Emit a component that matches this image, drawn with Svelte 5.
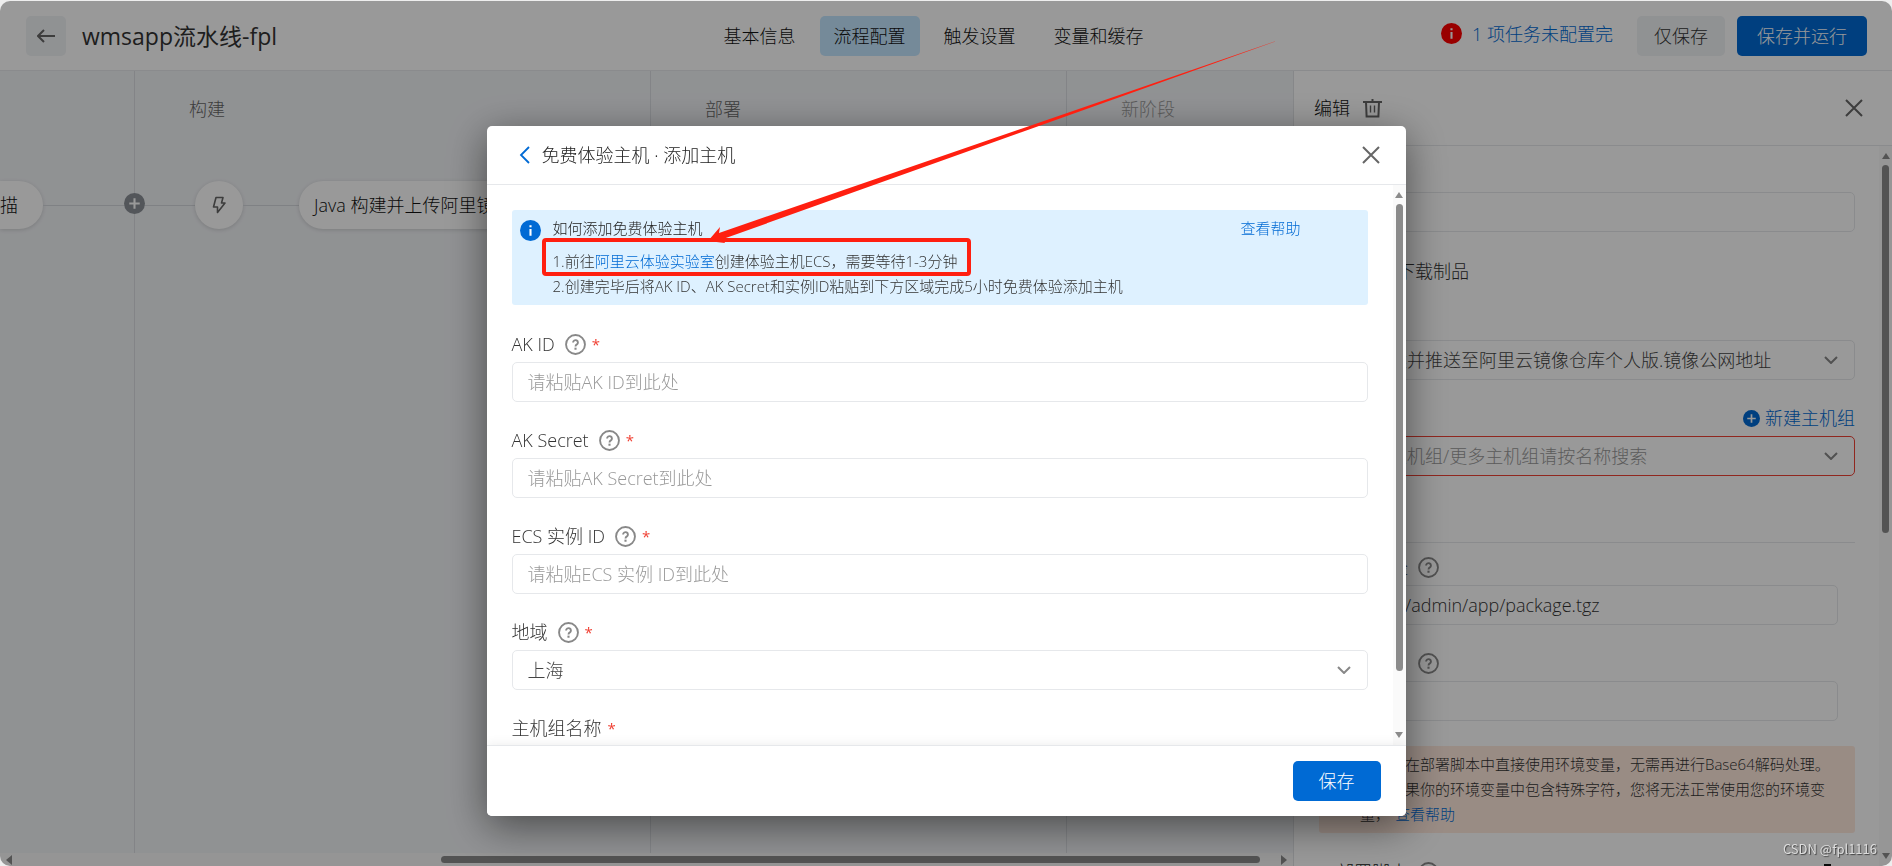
<script>
  let region = $state('上海');
  let artifact = $state('image');
  let hostGroup = $state('');
  let downloadPath = $state('/home/admin/app/package.tgz');

  const tabs = ['基本信息', '流程配置', '触发设置', '变量和缓存'];
  const activeTab = '流程配置';

  const fields = [
    { id: 'ak-id', label: 'AK ID', placeholder: '请粘贴AK ID到此处' },
    { id: 'ak-secret', label: 'AK Secret', placeholder: '请粘贴AK Secret到此处' },
    { id: 'ecs-id', label: 'ECS 实例 ID', placeholder: '请粘贴ECS 实例 ID到此处' }
  ];
</script>

{#snippet help()}
  <svg class="help" viewBox="0 0 20 20" width="21" height="21" aria-hidden="true">
    <circle cx="10" cy="10" r="9" fill="none" stroke="currentColor" stroke-width="1.8" />
    <path d="M7.700 8.100a2.300 2.200 0 1 1 3.600 1.800c-.9.6-1.300.9-1.300 1.900" fill="none" stroke="currentColor" stroke-width="1.8" />
    <rect x="9" y="13" width="2" height="2" fill="currentColor" />
  </svg>
{/snippet}

{#snippet info()}
  <svg class="info" viewBox="0 0 20 20" width="21" height="21" aria-hidden="true">
    <circle cx="10" cy="10" r="10" fill="currentColor" />
    <path d="M9 5h2v2H9zM9 8.500h2V15H9z" fill="#fff" />
  </svg>
{/snippet}

{#snippet plus(size)}
  <svg class="plus" viewBox="0 0 20 20" width={size} height={size} aria-hidden="true">
    <circle cx="10" cy="10" r="10" fill="currentColor" />
    <path d="M10 5v10M5 10h10" stroke="#fff" stroke-width="2" />
  </svg>
{/snippet}

{#snippet cross()}
  <svg viewBox="0 0 18 18" width="18" height="18" aria-hidden="true">
    <path d="M1 1l16 16M17 1L1 17" fill="none" stroke="currentColor" stroke-width="2" />
  </svg>
{/snippet}

{#snippet chevron()}
  <svg class="chevron" viewBox="0 0 14 8" width="14" height="8" aria-hidden="true">
    <path d="M1 1l6 6 6-6" fill="none" stroke="currentColor" stroke-width="2" />
  </svg>
{/snippet}

{#snippet scrollbar(start, size)}
  <div class="scrollbar" aria-hidden="true">
    <i class="up"></i>
    <div class="track"><b style="flex-grow: {size}"></b><span style="flex-grow: {start}"></span></div>
    <i class="down"></i>
  </div>
{/snippet}

<div class="page">
  <header>
    <div class="left">
      <button class="back" aria-label="返回">
        <svg viewBox="0 0 18 14" width="18" height="14"><path d="M7 1L1 7l6 6M1 7h17" fill="none" stroke="currentColor" stroke-width="2" /></svg>
      </button>
      <h1>wmsapp流水线-fpl</h1>
    </div>
    <nav>
      {#each tabs as tab}
        <a href="#tab" class:active={tab === activeTab}>{tab}</a>
      {/each}
    </nav>
    <div class="right">
      <a href="#todo" class="todo">{@render info()}1 项任务未配置完</a>
      <button class="plain">仅保存</button>
      <button class="primary run">保存并运行</button>
    </div>
  </header>

  <div class="main">
    <section class="canvas">
      <div class="stages">
        <div class="stage first">
          <div class="flow"><div class="node tail">描</div><div class="line"></div></div>
          <button class="add" aria-label="添加阶段">{@render plus(21)}</button>
        </div>
        <div class="stage build">
          <h2>构建</h2>
          <div class="flow">
            <div class="line"></div>
            <div class="node bolt">
              <svg viewBox="0 0 14 18" width="14" height="18"><path d="M4 1.500h7L9.500 7H13L5.500 16.500V11H1.500z" fill="none" stroke="currentColor" stroke-width="1.6" stroke-linejoin="round" /></svg>
            </div>
            <div class="line"></div>
            <div class="node job">Java 构建并上传阿里镜像</div>
          </div>
        </div>
        <div class="stage deploy"><h2>部署</h2></div>
        <div class="stage fresh"><h2>新阶段</h2></div>
      </div>
      <div class="hbar" aria-hidden="true"><i class="prev"></i><div class="track"><b></b></div><i class="next"></i></div>
    </section>

    <aside>
      <div class="aside-head">
        <h2>编辑</h2>
        <button class="icon trash" aria-label="删除">
          <svg viewBox="0 0 19 19" width="19" height="19"><path d="M0 3h19M3 3l.6 14.500h11.800L16 3M9.500 0v3" fill="none" stroke="currentColor" stroke-width="2" /><path d="M7.500 6.500v7M11.500 6.500v7" stroke="currentColor" stroke-width="1.400" /></svg>
        </button>
        <button class="icon close" aria-label="关闭">{@render cross()}</button>
      </div>
      <div class="aside-body">
        <div class="settings">
          <input class="box task" type="text" aria-label="任务名称" />
          <label class="check"><input type="checkbox" checked />部署前下载制品</label>
          <div class="select artifact">
            <select bind:value={artifact} aria-label="制品">
              <option value="image">镜像构建并推送至阿里云镜像仓库个人版.镜像公网地址</option>
            </select>
            {@render chevron()}
          </div>
          <a href="#group" class="new-group">{@render plus(17)}新建主机组</a>
          <div class="select error">
            <select bind:value={hostGroup} aria-label="主机组">
              <option value="">请选择主机组/更多主机组请按名称搜索</option>
            </select>
            {@render chevron()}
          </div>
          <div class="deploy-form">
            <div class="field">
              <label for="path">下载路径 {@render help()}</label>
              <input class="box" id="path" type="text" bind:value={downloadPath} />
            </div>
            <div class="field">
              <label for="user">执行用户 {@render help()}</label>
              <input class="box" id="user" type="text" />
            </div>
          </div>
          <div class="warning">
            <p>您可以在部署脚本中直接使用环境变量，无需再进行Base64解码处理。</p>
            <p>但是如果你的环境变量中包含特殊字符，您将无法正常使用您的环境变</p>
            <p>量， <a href="#help">查看帮助</a></p>
          </div>
          <div class="script">
            <span>部署脚本</span>{@render help()}
            <svg class="expand" viewBox="0 0 16 16" width="16" height="16" aria-hidden="true"><path d="M9 1h6v6M7 15H1V9" fill="none" stroke="currentColor" stroke-width="2" /></svg>
          </div>
        </div>
        {@render scrollbar(319, 366)}
      </div>
    </aside>
  </div>
</div>

<div class="overlay">
  <div class="dialog" role="dialog" aria-modal="true" aria-labelledby="dialog-title">
    <div class="dialog-head">
      <button class="icon prev-step" aria-label="上一步">
        <svg viewBox="0 0 11 18" width="11" height="18"><path d="M10 1L2 9l8 8" fill="none" stroke="currentColor" stroke-width="1.8" /></svg>
      </button>
      <h2 id="dialog-title">免费体验主机 · 添加主机</h2>
      <button class="icon close" aria-label="关闭">{@render cross()}</button>
    </div>
    <div class="dialog-body">
      <form>
        <div class="notice">
          {@render info()}
          <div class="notice-text">
            <h3>如何添加免费体验主机</h3>
            <p>1.前往<a href="#lab">阿里云体验实验室</a>创建体验主机ECS，需要等待1-3分钟</p>
            <p>2.创建完毕后将AK ID、AK Secret和实例ID粘贴到下方区域完成5小时免费体验添加主机</p>
          </div>
          <a href="#help">查看帮助</a>
        </div>
        {#each fields as field}
          <div class="field">
            <label for={field.id}>{field.label} {@render help()}<em>*</em></label>
            <input class="box" id={field.id} type="text" placeholder={field.placeholder} />
          </div>
        {/each}
        <div class="field">
          <label for="region">地域 {@render help()}<em>*</em></label>
          <div class="select">
            <select id="region" bind:value={region}><option>上海</option></select>
            {@render chevron()}
          </div>
        </div>
        <div class="field">
          <label for="group-name">主机组名称<em>*</em></label>
          <input class="box" id="group-name" type="text" />
        </div>
      </form>
      {@render scrollbar(61, 467)}
    </div>
    <div class="dialog-foot">
      <button class="primary">保存</button>
    </div>
  </div>
</div>

<!-- hand-drawn marks over the dialog -->
<svg class="marks" width="1280" height="290" viewBox="0 0 1280 290" aria-hidden="true">
  <defs>
    <linearGradient id="fade" x1="1" y1="0" x2="0" y2="0">
      <stop offset="0" stop-color="#ff1f10" stop-opacity="0.8" />
      <stop offset="0.1" stop-color="#ff1f10" />
    </linearGradient>
  </defs>
  <rect x="544" y="240" width="425" height="34" rx="2" fill="none" stroke="#ff1f10" stroke-width="4" />
  <path d="M708 241L720 227L719 233L1282 39L723 239L725 243Z" fill="url(#fade)" />
</svg>

<div class="watermark">CSDN @fpl1116</div>

<style>
  :global(body) {
    background: #eee;
  }

  .page,
  .overlay {
    font-family: "Open Sans", "Noto Sans CJK SC", sans-serif;
    font-size: 18px;
    font-weight: 300;
    line-height: 26px;
    color: #222;
  }

  .page {
    display: flex;
    flex-direction: column;
    height: calc(100vh - 1px);
    margin-top: 1px;
    border-radius: 10px;
    overflow: hidden;
    background: #fff;
  }

  h1, h2, h3, p {
    margin: 0;
    font-size: inherit;
    font-weight: inherit;
  }

  a {
    color: #006ad4;
    text-decoration: none;
  }

  button, input, select {
    font: inherit;
    color: inherit;
  }

  button {
    height: 40px;
    padding: 0;
    border: 0;
    border-radius: 5px;
    cursor: pointer;
  }

  svg {
    flex: none;
  }

  .icon {
    display: flex;
    align-items: center;
    height: 26px;
    background: none;
    color: #666;
  }

  .primary {
    width: 88px;
    background: #006ad4;
    color: #fff;
  }

  header {
    display: flex;
    align-items: center;
    height: 69px;
    padding: 0 25px 0 26px;
    border-bottom: 1px solid #e6e8eb;
  }

  .left, .right {
    display: flex;
    flex: 1 1 0;
    align-items: center;
  }

  .back {
    display: flex;
    align-items: center;
    justify-content: center;
    width: 40px;
    margin-right: 16px;
    background: #f1f3f6;
    color: #666;
  }

  h1 {
    font-size: 23px;
    font-weight: 400;
    line-height: 32px;
    color: #333;
  }

  nav {
    display: flex;
    gap: 10px;
    margin-right: 26px;
  }

  nav a {
    padding: 7px 14px;
    border-radius: 5px;
    color: #111;
  }

  nav a.active {
    background: #c4e6ff;
  }

  .right {
    justify-content: flex-end;
    white-space: nowrap;
  }

  .todo {
    display: flex;
    align-items: center;
    gap: 10px;
    margin-right: 24px;
    padding-bottom: 4px;
  }

  .todo :global(.info) {
    color: #f00;
  }

  .plain {
    width: 88px;
    margin-right: 12px;
    background: #f1f3f6;
    color: #333;
  }

  .run {
    width: 130px;
  }

  .main {
    display: flex;
    flex: 1;
    min-height: 0;
  }

  .canvas {
    display: flex;
    flex: 1;
    flex-direction: column;
    min-width: 0;
    background: #f1f3f6;
  }

  .stages {
    display: flex;
    flex: 1;
    overflow: hidden;
  }

  .stage {
    position: relative;
    flex: none;
    padding-top: 25px;
    border-right: 1px solid #dadde2;
    box-sizing: border-box;
  }

  .stage h2 {
    padding-left: 54px;
    color: #666;
  }

  .first {
    width: 135px;
    padding-top: 51px;
  }

  .build {
    width: 516px;
  }

  .deploy {
    width: 416px;
  }

  .fresh {
    width: 226px;
    border: 0;
  }

  .fresh h2 {
    color: #999;
  }

  .flow {
    display: flex;
    align-items: center;
    margin-top: 59px;
  }

  .line {
    width: 60px;
    height: 1px;
    background: #d4d7dc;
  }

  .first .line {
    flex: 1;
  }

  .bolt + .line {
    width: 56px;
  }

  .node {
    display: flex;
    align-items: center;
    height: 48px;
    border-radius: 24px;
    background: #fff;
    box-shadow: 0 1px 4px rgba(0, 0, 0, 0.15);
    color: #111;
    white-space: nowrap;
  }

  .tail {
    width: 43px;
    border-radius: 0 24px 24px 0;
  }

  .bolt {
    justify-content: center;
    width: 48px;
    color: #666;
  }

  .job {
    padding: 0 15px;
  }

  .add {
    position: absolute;
    top: 122px;
    right: -11px;
    z-index: 1;
    display: flex;
    height: 21px;
    background: none;
    color: #8a9096;
  }

  .hbar {
    display: flex;
    align-items: center;
    gap: 4px;
    height: 13px;
    padding: 0 6px;
    background: #f9f9f9;
  }

  .hbar .track {
    display: flex;
    flex: 1;
    padding: 0 17px 0 425px;
  }

  .hbar b {
    flex: 1;
    height: 7px;
    border-radius: 4px;
    background: #8b8b8b;
  }

  .prev, .next {
    border: 5px solid transparent;
    border-width: 5px 6px 5px 0;
    border-right-color: #8b8b8b;
  }

  .next {
    border-width: 5px 0 5px 6px;
    border-left-color: #8b8b8b;
  }

  aside {
    display: flex;
    flex-direction: column;
    width: 598px;
    border-left: 1px solid #e0e2e5;
    background: #fff;
  }

  .aside-head {
    display: flex;
    align-items: center;
    height: 74px;
    padding: 0 29px 0 20px;
    border-bottom: 1px solid #e6e8eb;
  }

  .aside-head h2 {
    color: #111;
  }

  .trash {
    margin-left: 13px;
  }

  .close {
    margin-left: auto;
  }

  .aside-body {
    display: flex;
    flex: 1;
    min-height: 0;
    overflow: hidden;
  }

  .settings {
    display: flex;
    flex: 1;
    flex-direction: column;
    padding: 46px 24px 0 25px;
    color: #333;
  }

  .settings > * {
    flex: none;
  }

  .box, select {
    display: block;
    width: 100%;
    height: 40px;
    box-sizing: border-box;
    padding: 0 15px;
    border: 1px solid #e6e8eb;
    border-radius: 5px;
    outline: none;
    background: #fff;
    appearance: none;
  }

  .box::placeholder {
    color: #999;
    opacity: 1;
  }

  .select {
    position: relative;
    color: #444;
  }

  .select :global(.chevron) {
    position: absolute;
    top: 16px;
    right: 17px;
    color: #888;
    pointer-events: none;
  }

  .check {
    display: flex;
    align-items: center;
    gap: 8px;
    margin: 26px 0 56px;
  }

  .check input {
    width: 16px;
    height: 16px;
    margin: 0;
  }

  .new-group {
    display: flex;
    align-items: center;
    align-self: flex-end;
    gap: 5px;
    margin: 25px 0 5px;
  }

  .error {
    color: #999;
  }

  .error select {
    border-color: #f04134;
  }

  .deploy-form {
    margin-top: 66px;
    padding: 10px 17px 1px;
    border-top: 1px solid #e6e8eb;
  }

  .field {
    margin-bottom: 24px;
  }

  .field label {
    display: flex;
    align-items: center;
    gap: 6px;
    height: 28px;
    margin-bottom: 4px;
    color: #333;
  }

  .field :global(.help), .script :global(.help) {
    margin-left: 4px;
    color: #888;
  }

  em {
    font-size: 15px;
    font-style: normal;
    font-weight: 400;
    line-height: 20px;
    color: #f04134;
  }

  .warning {
    padding: 6px 16px 6px 41px;
    border-radius: 3px;
    background: #ffe9dd;
    font-size: 15px;
    line-height: 25px;
    white-space: nowrap;
  }

  .warning a {
    margin-left: 1px;
  }

  .script {
    display: flex;
    align-items: center;
    gap: 6px;
    margin-top: 26px;
    padding: 0 24px 0 17px;
    color: #111;
  }

  .expand {
    margin-left: auto;
  }

  .scrollbar {
    display: flex;
    flex-direction: column;
    align-items: center;
    width: 13px;
    box-sizing: border-box;
    padding: 7px 0;
    background: #fafafa;
  }

  .scrollbar .track {
    display: flex;
    flex: 1;
    flex-direction: column;
    width: 7px;
    padding-top: 6px;
  }

  .scrollbar b {
    border-radius: 4px;
    background: #8b8b8b;
  }

  .up, .down {
    border: 4px solid transparent;
    border-width: 0 4px 6px;
    border-bottom-color: #8b8b8b;
  }

  .down {
    border-width: 6px 4px 0;
    border-top-color: #8b8b8b;
  }

  .overlay {
    position: fixed;
    inset: 1px 0 0;
    z-index: 2;
    display: flex;
    align-items: flex-start;
    justify-content: center;
    padding-top: 125px;
    border-radius: 10px;
    background: rgba(0, 0, 0, 0.4);
  }

  .dialog {
    width: 919px;
    border-radius: 5px;
    overflow: hidden;
    background: #fff;
    box-shadow: 0 10px 40px rgba(0, 0, 0, 0.5);
  }

  .dialog-head {
    display: flex;
    align-items: center;
    height: 58px;
    padding: 0 26px 0 32px;
    border-bottom: 1px solid #e6e8eb;
  }

  .prev-step {
    margin-right: 12px;
    color: #006ad4;
  }

  .dialog-body {
    display: flex;
    height: 560px;
    overflow: hidden;
  }

  form {
    flex: 1;
    padding: 25px 25px 0;
  }

  .notice {
    display: flex;
    align-items: flex-start;
    height: 95px;
    box-sizing: border-box;
    margin-bottom: 25px;
    padding: 6px 67px 0 8px;
    border-radius: 3px;
    background: #def1ff;
    font-size: 15px;
    line-height: 25px;
  }

  .notice :global(.info) {
    margin: 4px 12px 0 0;
    color: #006ad4;
  }

  .notice-text {
    flex: 1;
  }

  .notice h3 {
    margin-bottom: 8px;
  }

  .notice p {
    color: #333;
  }

  .dialog-foot {
    display: flex;
    align-items: center;
    justify-content: flex-end;
    position: relative;
    height: 70px;
    padding-right: 25px;
    border-top: 1px solid #e6e8eb;
    background: #fff;
    box-shadow: 0 -2px 10px rgba(0, 0, 0, 0.06);
  }

  .marks {
    position: absolute;
    top: 0;
    left: 0;
    z-index: 3;
    pointer-events: none;
  }

  .watermark {
    position: fixed;
    right: 15px;
    bottom: 5px;
    z-index: 3;
    font-family: "Noto Sans CJK SC", sans-serif;
    font-size: 13px;
    line-height: 24px;
    color: #ddd;
    text-shadow: 1px 1px 1px #444;
  }
</style>
